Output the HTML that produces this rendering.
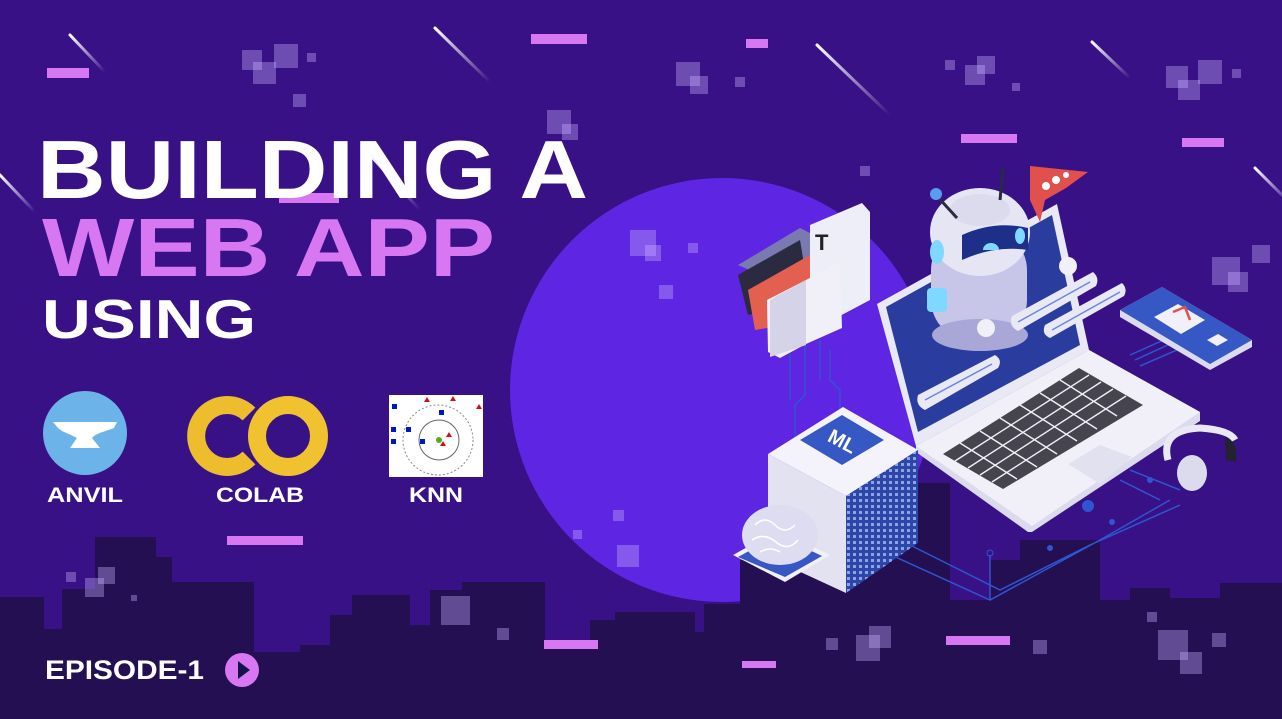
<!DOCTYPE html>
<html><head><meta charset="utf-8"><style>
html,body{margin:0;padding:0;background:#371185;overflow:hidden}
svg{display:block}
text{font-family:"Liberation Sans",sans-serif;font-weight:bold}
</style></head><body>
<svg width="1282" height="719" viewBox="0 0 1282 719" xmlns="http://www.w3.org/2000/svg">
<defs>
<linearGradient id="met" x1="0" y1="0" x2="1" y2="1"><stop offset="0" stop-color="#fff"/><stop offset="1" stop-color="#fff" stop-opacity="0"/></linearGradient>
<pattern id="dots" width="6" height="6" patternUnits="userSpaceOnUse"><rect width="6" height="6" fill="#2d47a8"/><rect x="1" y="1" width="3" height="3" fill="#8fa2e6"/></pattern>
</defs>
<rect width="1282" height="719" fill="#371185"/>
<circle cx="722" cy="390" r="212" fill="#5e25e3"/>
<path fill="#230f52" d="M0 597H44V629H62V589H95V537H156V557H172V582H254V652H300V645H330V615H352V595H410V625H430V590H462V582H545V640H570V645H590V620H615V612H695V632H704V604H740V560H830V575H865V483H950V600H990V560H1020V540H1100V600H1130V588H1170V598H1220V583H1282V719H0Z"/>
<g stroke="url(#met)" stroke-width="3" stroke-linecap="round">
<line x1="70" y1="35" x2="105" y2="72"/><line x1="435" y1="28" x2="490" y2="82"/><line x1="817" y1="45" x2="890" y2="115"/><line x1="1092" y1="42" x2="1130" y2="78"/><line x1="1255" y1="168" x2="1290" y2="203"/><line x1="0" y1="175" x2="35" y2="212"/><line x1="370" y1="155" x2="420" y2="210"/>
</g>
<g fill="#d877f2">
<rect x="47" y="68" width="42" height="10"/><rect x="531" y="34" width="56" height="10"/><rect x="746" y="39" width="22" height="9"/><rect x="961" y="134" width="56" height="9"/><rect x="1182" y="138" width="42" height="9"/><rect x="279" y="193" width="60" height="10"/><rect x="227" y="536" width="76" height="9"/><rect x="544" y="640" width="54" height="9"/><rect x="946" y="636" width="64" height="9"/><rect x="742" y="661" width="34" height="7"/>
</g>
<g fill="#c9b0ff" fill-opacity="0.38">
<rect x="242" y="50" width="20" height="20"/><rect x="253" y="62" width="23" height="22"/><rect x="274" y="44" width="24" height="24"/><rect x="307" y="53" width="9" height="9"/><rect x="293" y="94" width="13" height="13"/>
<rect x="547" y="110" width="24" height="24"/><rect x="562" y="124" width="16" height="16"/>
<rect x="676" y="62" width="24" height="24"/><rect x="690" y="76" width="18" height="18"/><rect x="735" y="77" width="10" height="10"/>
<rect x="945" y="60" width="10" height="10"/><rect x="965" y="65" width="20" height="20"/><rect x="977" y="56" width="18" height="18"/><rect x="1012" y="83" width="8" height="8"/>
<rect x="1166" y="66" width="22" height="22"/><rect x="1178" y="80" width="22" height="20"/><rect x="1198" y="60" width="24" height="24"/><rect x="1232" y="69" width="9" height="9"/>
<rect x="860" y="166" width="10" height="10"/><rect x="630" y="230" width="26" height="26"/><rect x="645" y="245" width="16" height="16"/><rect x="688" y="243" width="10" height="10"/><rect x="659" y="285" width="14" height="14"/>
<rect x="1212" y="257" width="28" height="28"/><rect x="1228" y="272" width="20" height="20"/><rect x="1252" y="245" width="18" height="18"/>
<rect x="617" y="545" width="22" height="22"/><rect x="613" y="510" width="11" height="11"/><rect x="573" y="530" width="9" height="9"/>
<rect x="66" y="572" width="10" height="10"/><rect x="85" y="578" width="19" height="19"/><rect x="98" y="567" width="17" height="17"/><rect x="131" y="595" width="6" height="6"/>
<rect x="441" y="596" width="29" height="29"/><rect x="497" y="628" width="12" height="12"/>
<rect x="826" y="638" width="12" height="12"/><rect x="856" y="635" width="24" height="26"/><rect x="869" y="626" width="22" height="22"/>
<rect x="1158" y="630" width="30" height="30"/><rect x="1180" y="652" width="22" height="22"/><rect x="1212" y="633" width="14" height="14"/><rect x="1147" y="612" width="10" height="10"/><rect x="1033" y="640" width="14" height="14"/>
</g>
<text x="37" y="198" font-size="83" fill="#fff" textLength="551" lengthAdjust="spacingAndGlyphs">BUILDING A</text>
<text x="42" y="276" font-size="83" fill="#d877f2" textLength="453" lengthAdjust="spacingAndGlyphs">WEB APP</text>
<text x="42" y="338" font-size="55" fill="#fff" textLength="214" lengthAdjust="spacingAndGlyphs">USING</text>
<circle cx="85" cy="433" r="42" fill="#6bb3e8"/>
<path fill="#fff" d="M53 422H117L114 428C104 432 96 433 92 438L100 448H70L77 438C70 434 62 432 58 428Z"/>
<text x="85" y="502" font-size="21" fill="#fff" text-anchor="middle" textLength="76" lengthAdjust="spacingAndGlyphs">ANVIL</text>
<path d="M249 414A31 31 0 1 0 249 458" fill="none" stroke="#eebd2e" stroke-width="18"/>
<circle cx="288" cy="436" r="31" fill="none" stroke="#f0c230" stroke-width="18"/>
<text x="260" y="502" font-size="21" fill="#fff" text-anchor="middle" textLength="88" lengthAdjust="spacingAndGlyphs">COLAB</text>
<rect x="389" y="395" width="94" height="82" fill="#fff"/>
<circle cx="438" cy="440" r="35" fill="none" stroke="#888" stroke-width="1" stroke-dasharray="2 2"/>
<circle cx="439" cy="440" r="20" fill="none" stroke="#666" stroke-width="1"/>
<circle cx="439" cy="440" r="3" fill="#5a2"/>
<g fill="#0015c8"><rect x="392" y="404" width="5" height="5"/><rect x="439" y="410" width="5" height="5"/><rect x="391" y="427" width="5" height="5"/><rect x="406" y="427" width="5" height="5"/><rect x="391" y="439" width="5" height="5"/><rect x="420" y="439" width="5" height="5"/></g>
<g fill="#d01010"><path d="M427 397l3 5h-6z"/><path d="M453 396l3 5h-6z"/><path d="M479 404l3 5h-6z"/><path d="M449 432l3 5h-6z"/><path d="M443 441l3 5h-6z"/></g>
<text x="436" y="502" font-size="21" fill="#fff" text-anchor="middle" textLength="54" lengthAdjust="spacingAndGlyphs">KNN</text>
<text x="45" y="679" font-size="27" fill="#fff" textLength="159" lengthAdjust="spacingAndGlyphs">EPISODE-1</text>
<circle cx="242" cy="670" r="17" fill="#d877f2"/>
<path d="M238 661L250 670L238 679Z" fill="#14124a"/>
<g stroke="#3055d0" stroke-width="1.5" fill="none">
<path d="M790 350V400M805 345V395L795 405V440M820 340V380M830 350V380L840 390V420"/>
<path d="M880 550L990 600L1100 540L1170 500M900 540L1000 590L1090 545L1180 505M990 600V555M1130 470L1180 490M1120 480L1160 500"/>
<path d="M1130 355L1175 335M1135 360L1190 335M1140 366L1200 340"/>
</g>
<g fill="#3055d0"><circle cx="1088" cy="506" r="6"/><circle cx="990" cy="553" r="3" fill="none" stroke="#3055d0"/><circle cx="1112" cy="522" r="3"/><circle cx="1050" cy="548" r="3"/><circle cx="1150" cy="480" r="3"/></g>
<path d="M877 304L1057 204L1089 350L916 446Z" fill="#e9e8f5"/>
<path d="M886 307L1052 215L1080 345L918 432Z" fill="#2a3d9e"/>
<path d="M916 446L1089 350L1200 412L1200 421L1032 532L1028 532L916 452Z" fill="#dcdbee"/>
<path d="M916 446L1089 350L1200 412L1032 526Z" fill="#f1f0f8"/>
<path d="M943 454L1079 368L1143 405L1003 489Z" fill="#45444f"/>
<g stroke="#f1f0f8" stroke-width="1.4"><path d="M955 461L1089 375M968 468L1101 382M980 475L1113 389M992 482L1126 396"/><path d="M960 443L1017 479M980 431L1037 467M1000 418L1057 454M1020 405L1077 441M1040 393L1097 429M1060 380L1117 416"/></g>
<path d="M1068 464L1100 445L1132 457L1100 484Z" fill="#e2e1f0"/>
<rect x="931" y="230" width="96" height="110" rx="40" fill="#c7c5e8"/>
<ellipse cx="980" cy="335" rx="48" ry="16" fill="#a9a6d8"/>
<ellipse cx="980" cy="232" rx="50" ry="44" fill="#e6e5f4"/>
<ellipse cx="980" cy="210" rx="30" ry="16" fill="#dcdbee"/>
<path d="M962 235Q995 220 1028 228L1028 250Q995 245 962 260Z" fill="#1e2f8a"/>
<path d="M983 250a8 7 0 0 1 16 0z" fill="#7fd8ff"/>
<ellipse cx="1020" cy="236" rx="5" ry="8" fill="#7fd8ff"/>
<ellipse cx="937" cy="252" rx="7" ry="12" fill="#7fd8ff"/>
<rect x="927" y="288" width="20" height="24" rx="4" fill="#7fd8ff"/>
<line x1="936" y1="195" x2="957" y2="218" stroke="#2a2a40" stroke-width="3"/>
<circle cx="936" cy="194" r="6" fill="#5b9cf0"/>
<line x1="1003" y1="168" x2="1000" y2="200" stroke="#2a2a40" stroke-width="3"/>
<circle cx="986" cy="328" r="9" fill="#f1f0f8"/>
<path d="M1030 166L1088 172L1066 188L1045 200L1040 222L1030 200Z" fill="#e0504c"/>
<g fill="#fff"><circle cx="1046" cy="186" r="4"/><circle cx="1056" cy="180" r="4"/><circle cx="1066" cy="175" r="3"/></g>
<g fill="#e9e8f5"><path d="M918 395L995 355Q1003 360 998 368L925 410Q915 405 918 395Z"/><path d="M1012 316L1093 272Q1100 278 1096 286L1018 331Q1008 326 1012 316Z"/><path d="M1045 325L1122 283Q1128 289 1124 296L1050 338Q1041 334 1045 325Z"/></g>
<g stroke="#6a86e0" stroke-width="1.5"><path d="M925 400L992 364M1018 322L1090 282M1052 330L1120 292"/></g>
<circle cx="1068" cy="266" r="9" fill="#f1f0f8"/>
<path d="M1120 310L1162 287L1252 340L1252 347L1210 370L1120 317Z" fill="#dcdbee"/>
<path d="M1120 310L1162 287L1252 340L1210 364Z" fill="#3558c4"/>
<path d="M1154 317L1178 304L1205 320L1181 334Z" fill="#f1f0f8"/>
<path d="M1173 312L1185 307L1190 320" fill="none" stroke="#e0504c" stroke-width="2.5"/>
<path d="M1207 340L1218 334L1228 340L1217 346Z" fill="#f1f0f8"/>
<path d="M1168 460Q1160 430 1200 428Q1230 430 1235 440" fill="none" stroke="#e9e8f5" stroke-width="7"/>
<ellipse cx="1192" cy="473" rx="15" ry="18" fill="#dcdbee"/>
<path d="M1225 437Q1238 440 1236 462L1226 460Z" fill="#222230"/>
<path d="M738 265L800 228L860 258L800 292Z" fill="#7a7ab0"/>
<path d="M738 275L800 240L810 300L748 315Z" fill="#2a2a40"/>
<path d="M748 290L810 255L815 320L755 330Z" fill="#e36050"/>
<path d="M810 225L862 203L870 212L870 300L836 318L810 310Z" fill="#eeeef8"/>
<text x="815" y="250" font-family="Liberation Serif" font-size="22" fill="#222" font-weight="normal">T</text>
<path d="M767 300L806 280L840 262L842 328L806 344L780 358L768 352Z" fill="#f1f0f8"/>
<path d="M770 300L806 280V345L770 357Z" fill="#d4d3e8"/>
<path d="M768 454L843 407L918 450L846 496Z" fill="#f4f3fb"/>
<path d="M768 454L846 496V593L768 557Z" fill="#e3e2f1"/>
<path d="M846 496L918 450V543L846 593Z" fill="url(#dots)"/>
<path d="M800 440L842 415L884 440L842 465Z" fill="#3558c4"/>
<text x="842" y="448" font-size="20" fill="#fff" text-anchor="middle" transform="rotate(28 842 442)">ML</text>
<path d="M733 555L778 530L830 555L785 582Z" fill="#f1f0f8"/>
<path d="M738 557L778 535L822 556L785 577Z" fill="#3558c4"/>
<ellipse cx="780" cy="535" rx="38" ry="30" fill="#dedcf0"/>
<path d="M755 525q10-10 20 0t20 0M752 540q12-8 24 2t22-2M760 552q10-6 20 0" stroke="#fff" fill="none" stroke-width="1.5"/>
</svg>
</body></html>
